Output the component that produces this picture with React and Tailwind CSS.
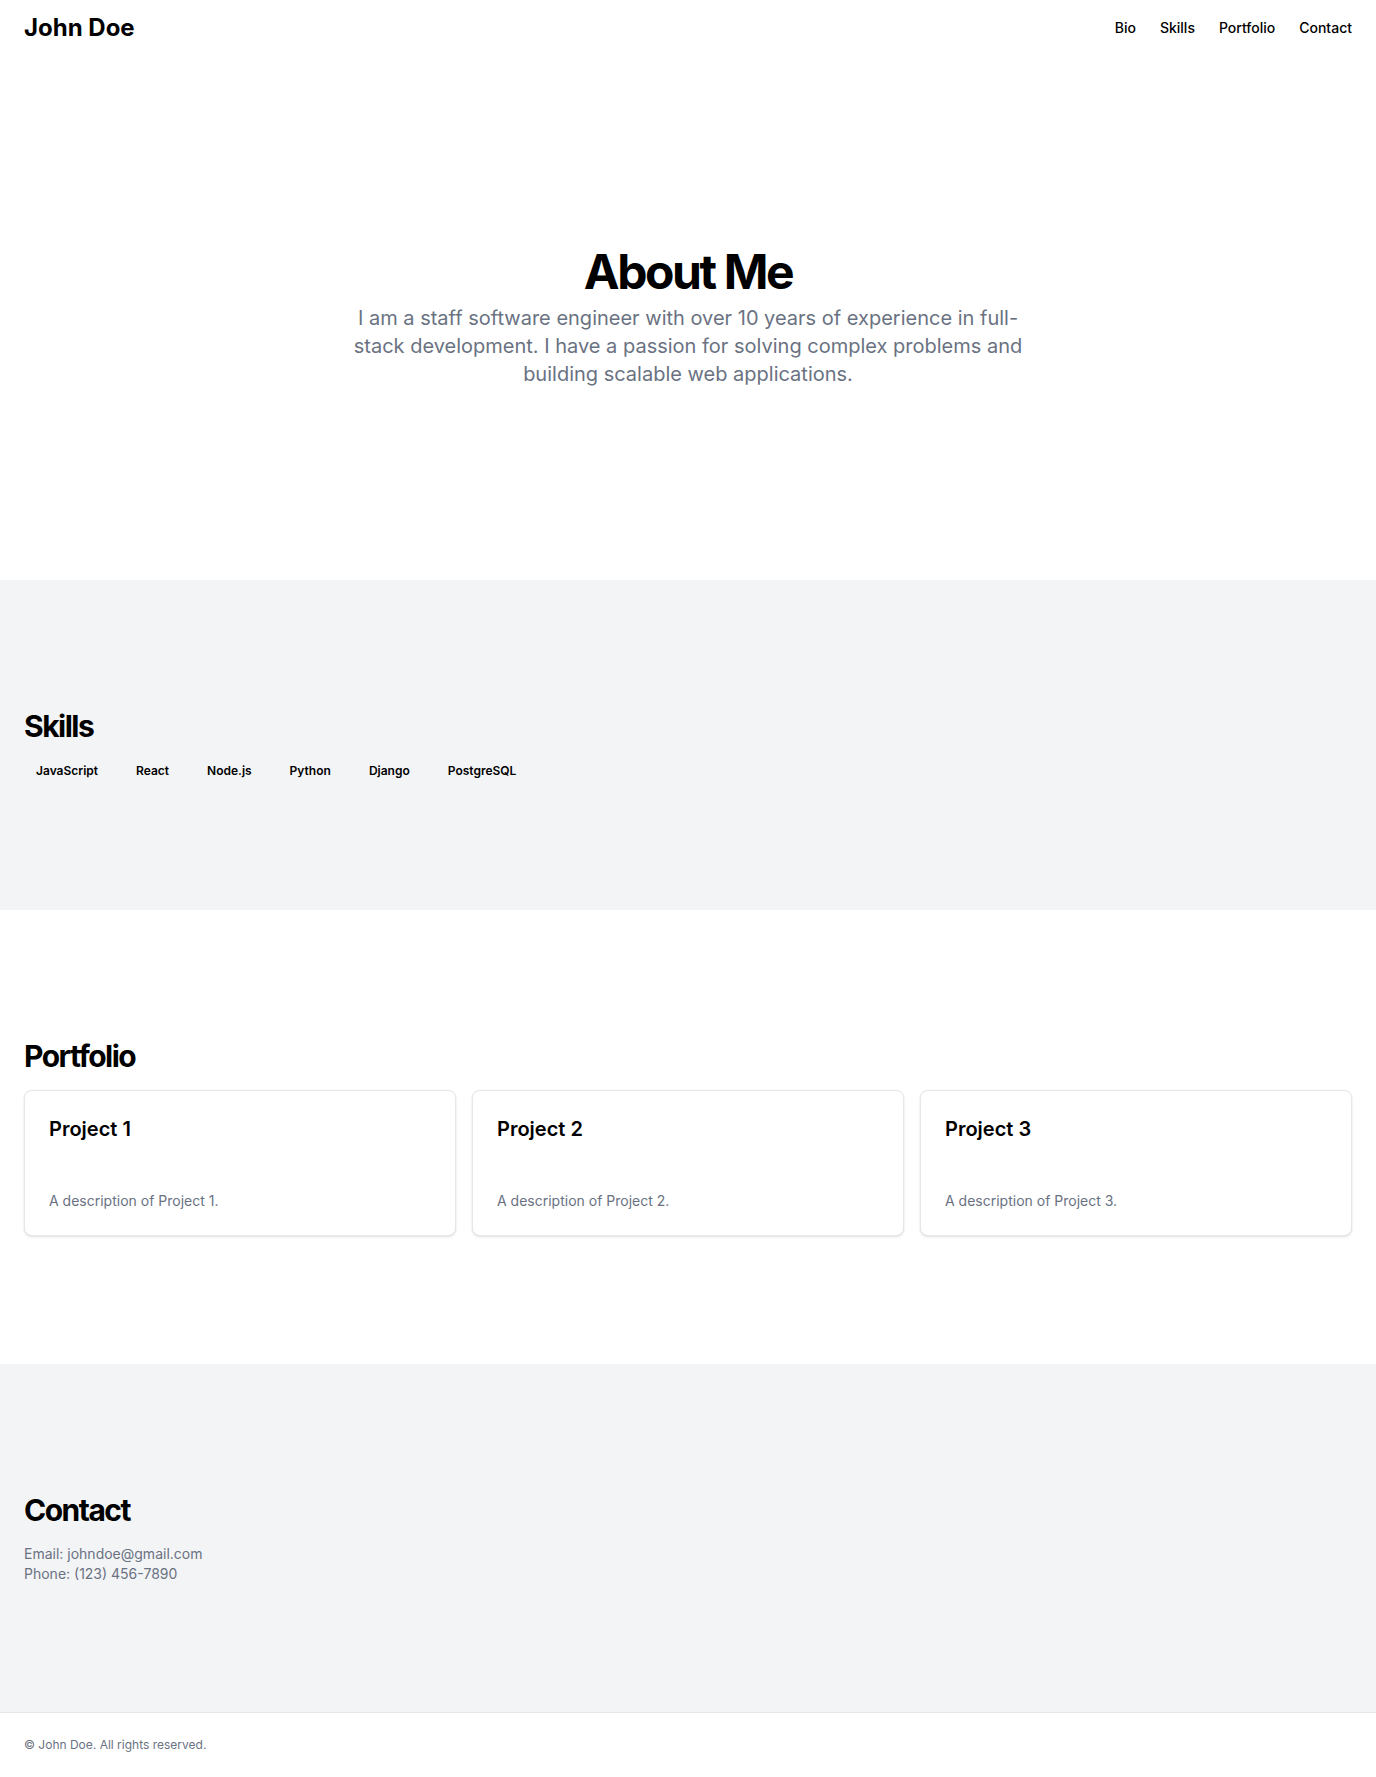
import React from 'react';

const skills = ['JavaScript', 'React', 'Node.js', 'Python', 'Django', 'PostgreSQL'];

const projects = [
  { title: 'Project 1', text: 'A description of Project 1.' },
  { title: 'Project 2', text: 'A description of Project 2.' },
  { title: 'Project 3', text: 'A description of Project 3.' },
];

const App = () => {
  return (
    <div className="min-h-screen bg-white font-['Inter',sans-serif] text-black">
      {/* Header */}
      <header className="h-14 px-6 flex items-center justify-between">
        <span className="text-2xl font-bold">John Doe</span>
        <nav className="flex items-center gap-6 text-sm font-medium">
          <a href="#bio">Bio</a>
          <a href="#skills">Skills</a>
          <a href="#portfolio">Portfolio</a>
          <a href="#contact">Contact</a>
        </nav>
      </header>

      {/* Bio */}
      <section id="bio" className="py-48 px-6">
        <div className="flex flex-col items-center text-center">
          <h1 className="text-5xl leading-none font-bold tracking-tighter">About Me</h1>
          <p className="mt-2 max-w-2xl text-xl text-gray-500">
            I am a staff software engineer with over 10 years of experience in full-stack development. I have a passion for solving complex problems and building scalable web applications.
          </p>
        </div>
      </section>

      {/* Skills */}
      <section id="skills" className="py-32 px-6 bg-gray-100">
        <h2 className="text-3xl font-bold tracking-tighter">Skills</h2>
        <div className="mt-4 flex flex-wrap gap-3.5">
          {skills.map((s) => (
            <span key={s} className="px-3 py-[3px] text-xs font-semibold">
              {s}
            </span>
          ))}
        </div>
      </section>

      {/* Portfolio */}
      <section id="portfolio" className="py-32 px-6">
        <h2 className="text-3xl font-bold tracking-tighter">Portfolio</h2>
        <div className="mt-4 grid grid-cols-3 gap-4">
          {projects.map((p) => (
            <div key={p.title} className="rounded-lg border border-gray-200 bg-white p-6 shadow-sm">
              <h3 className="text-xl font-semibold">{p.title}</h3>
              <p className="mt-12 text-sm text-gray-500">{p.text}</p>
            </div>
          ))}
        </div>
      </section>

      {/* Contact */}
      <section id="contact" className="py-32 px-6 bg-gray-100">
        <h2 className="text-3xl font-bold tracking-tighter">Contact</h2>
        <div className="mt-4 text-sm text-gray-500">
          <p>Email: johndoe@gmail.com</p>
          <p>Phone: (123) 456-7890</p>
        </div>
      </section>

      {/* Footer */}
      <footer className="border-t border-gray-200 px-6 py-6">
        <p className="text-xs text-gray-500">&copy; John Doe. All rights reserved.</p>
      </footer>
    </div>
  );
};

export default App;
